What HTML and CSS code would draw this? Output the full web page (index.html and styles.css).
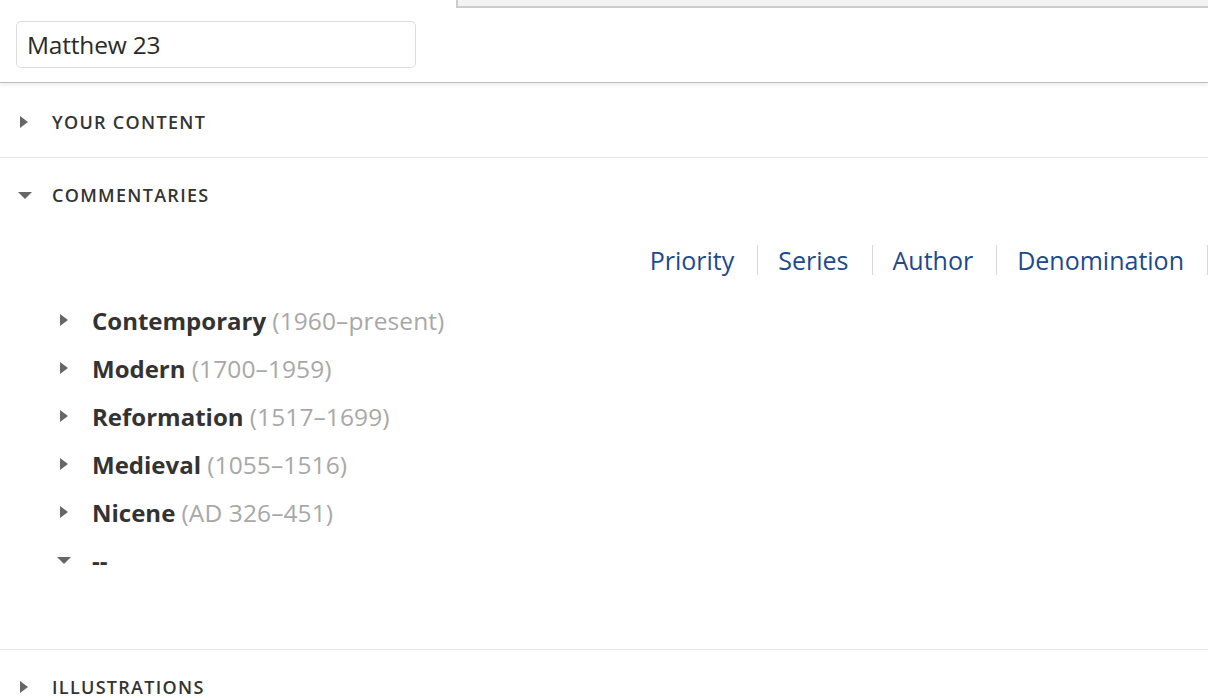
FILE: index.html
```html
<!DOCTYPE html>
<html>
<head>
<meta charset="utf-8">
<link rel="stylesheet" href="styles.css">
</head>
<body>
<header class="top">
  <div class="search"><span class="search-text">Matthew 23</span></div>
  <div class="overhang"></div>
</header>
<main class="sections">
  <section class="sec first">
    <div class="sec-head"><span class="tri tri-right"></span><span class="sec-title">YOUR CONTENT</span></div>
  </section>
  <section class="sec open">
    <div class="sec-head"><span class="tri tri-down"></span><span class="sec-title">COMMENTARIES</span></div>
    <div class="sec-body">
      <nav class="tabs">
        <a class="tab">Priority</a>
        <a class="tab">Series</a>
        <a class="tab">Author</a>
        <a class="tab">Denomination</a>
      </nav>
      <ul class="tree">
        <li class="node"><span class="tri tri-right small"></span><span class="label"><b class="name">Contemporary</b> <span class="range">(1960–present)</span></span></li>
        <li class="node"><span class="tri tri-right small"></span><span class="label"><b class="name">Modern</b> <span class="range">(1700–1959)</span></span></li>
        <li class="node"><span class="tri tri-right small"></span><span class="label"><b class="name">Reformation</b> <span class="range">(1517–1699)</span></span></li>
        <li class="node"><span class="tri tri-right small"></span><span class="label"><b class="name">Medieval</b> <span class="range">(1055–1516)</span></span></li>
        <li class="node"><span class="tri tri-right small"></span><span class="label"><b class="name">Nicene</b> <span class="range">(AD 326–451)</span></span></li>
        <li class="node"><span class="tri tri-down small"></span><span class="label"><b class="name">--</b></span></li>
      </ul>
    </div>
  </section>
  <section class="sec">
    <div class="sec-head"><span class="tri tri-right"></span><span class="sec-title">ILLUSTRATIONS</span></div>
  </section>
</main>
</body>
</html>
```
FILE: styles.css
```css
* { box-sizing: border-box; }
html, body { margin: 0; padding: 0; background: #fff; }
body {
  font-family: "Open Sans", "Noto Sans", sans-serif;
  color: #333;
  overflow: hidden;
  height: 698px;
}
.top {
  display: flex;
  align-items: flex-start;
  height: 83px;
  padding-left: 16px;
  border-bottom: 1px solid #bdbdbd;
  box-shadow: 0 2px 4px rgba(0,0,0,0.08);
  position: relative;
  z-index: 1;
}
.search {
  margin-top: 21px;
  width: 400px;
  height: 47px;
  border: 1px solid #dcdcdc;
  border-radius: 5px;
  display: flex;
  align-items: center;
  padding-left: 10px;
}
.search-text {
  font-size: 24.5px;
  color: #2a2a2a;
  letter-spacing: -0.2px;
}
.overhang {
  margin-left: auto;
  width: 752px;
  height: 8px;
  background: #f3f3f3;
  border-left: 2px solid #cccccc;
  border-bottom: 2px solid #cccccc;
}
.sec { border-bottom: 1px solid #e6e6e6; }
.sec:last-child { border-bottom: none; }
.sec-head {
  display: flex;
  align-items: center;
  height: 74px;
  padding-left: 18px;
}
.sec.first .sec-head { padding-top: 3px; }
.sec-title {
  font-size: 18px;
  font-weight: 600;
  letter-spacing: 1.3px;
  color: #333;
}
.tri { display: inline-block; flex: none; }
.tri-right {
  width: 0; height: 0;
  border-top: 6px solid transparent;
  border-bottom: 6px solid transparent;
  border-left: 8px solid #666;
  margin-left: 2px;
  margin-right: 24px;
}
.tri-down {
  width: 0; height: 0;
  border-left: 7px solid transparent;
  border-right: 7px solid transparent;
  border-top: 7px solid #666;
  margin-right: 20px;
}
.sec-body { padding-bottom: 65px; }
.tabs {
  display: flex;
  justify-content: flex-end;
  align-items: center;
  height: 56px;
}
.tab {
  font-size: 25px;
  color: #1c4a8c;
  padding: 0 23px 0 20px;
  border-right: 1px solid #d8d8d8;
  line-height: 30px;
}
.tree {
  list-style: none;
  margin: 8px 0 0;
  padding: 0 0 0 60px;
}
.node {
  display: flex;
  align-items: center;
  height: 48px;
  font-size: 24px;
  white-space: pre;
}
.node .tri-right.small {
  margin-left: 0;
  margin-right: 24px;
}
.node .tri-down.small {
  margin-left: -3px;
  margin-right: 21px;
}
.name { font-weight: 700; color: #333; }
.range { color: #a8a8a8; font-size: 24.5px; letter-spacing: 0.1px; }
```
